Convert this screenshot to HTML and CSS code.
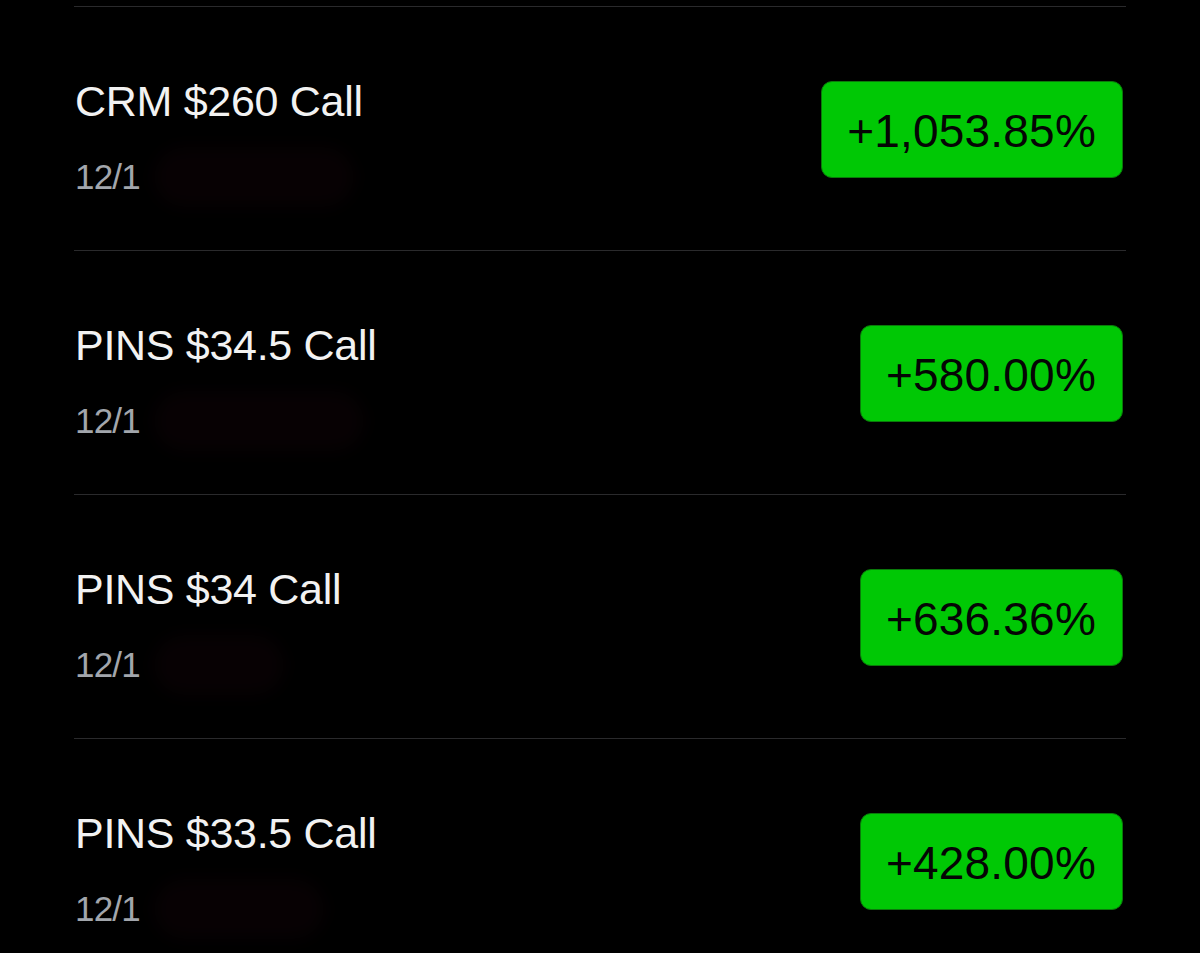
FILE: index.html
```
<!DOCTYPE html>
<html lang="en">
<head>
<meta charset="utf-8">
<title>Options</title>
<link rel="stylesheet" href="styles.css">
</head>
<body>
<div class="list">
  <div class="row">
    <div class="info">
      <div class="title">CRM $260 Call</div>
      <div class="date">12/1<span class="redact r1"></span></div>
    </div>
    <div class="badge">+1,053.85%</div>
  </div>
  <div class="row">
    <div class="info">
      <div class="title">PINS $34.5 Call</div>
      <div class="date">12/1<span class="redact r2"></span></div>
    </div>
    <div class="badge">+580.00%</div>
  </div>
  <div class="row">
    <div class="info">
      <div class="title">PINS $34 Call</div>
      <div class="date">12/1<span class="redact r3"></span></div>
    </div>
    <div class="badge">+636.36%</div>
  </div>
  <div class="row">
    <div class="info">
      <div class="title">PINS $33.5 Call</div>
      <div class="date">12/1<span class="redact r4"></span></div>
    </div>
    <div class="badge">+428.00%</div>
  </div>
</div>
</body>
</html>
```
FILE: styles.css
```
html, body {
  margin: 0;
  padding: 0;
  background: #000;
  height: 100%;
  overflow: hidden;
}
body {
  font-family: "Liberation Sans", Arial, sans-serif;
}
.list {
  padding: 6px 74px 0 74px;
}
.row {
  box-sizing: border-box;
  height: 244px;
  border-top: 1px solid #2a2a2c;
  display: flex;
  justify-content: space-between;
  align-items: flex-start;
  padding-top: 69px;
}
.info {
  display: flex;
  flex-direction: column;
}
.title {
  font-size: 43px;
  line-height: 50px;
  color: #f2f2f2;
  padding-left: 1px;
  letter-spacing: -0.3px;
}
.date {
  margin-top: 21px;
  font-size: 35px;
  line-height: 40px;
  color: #a2a6ac;
  letter-spacing: -0.8px;
  padding-left: 1px;
  display: flex;
  align-items: center;
}
.redact {
  display: inline-block;
  height: 60px;
  border-radius: 30px;
  background: #070103;
  filter: blur(8px);
  margin-left: 14px;
}
.r1 { width: 200px; }
.r2 { width: 210px; }
.r3 { width: 130px; }
.r4 { width: 170px; }
.badge {
  margin-top: 5px;
  height: 97px;
  box-sizing: border-box;
  padding: 3px 26px 0 25px;
  display: flex;
  align-items: center;
  background: #00c805;
  border: 1px solid #0a7a0a;
  border-radius: 11px;
  color: #050505;
  font-size: 46px;
  letter-spacing: 0.2px;
  margin-right: 3px;
}
```
